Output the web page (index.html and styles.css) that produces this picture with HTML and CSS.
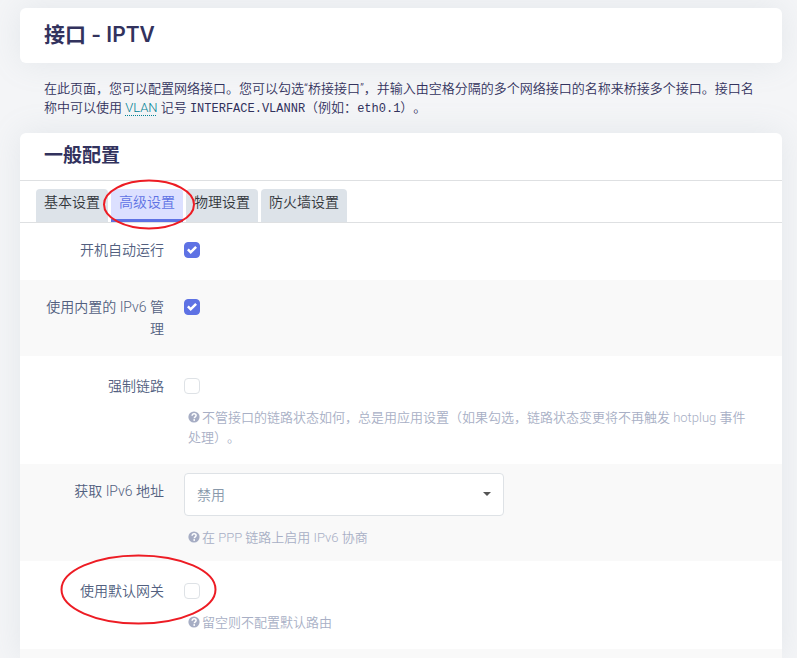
FILE: index.html
```html
<!DOCTYPE html>
<html lang="zh-CN">
<head>
<meta charset="utf-8">
<meta name="viewport" content="width=device-width, initial-scale=1">
<title>接口 - IPTV</title>
<link rel="stylesheet" href="styles.css">
</head>
<body>
<svg class="sprite" aria-hidden="true">
  <symbol id="help" viewBox="0 0 12 12">
    <circle cx="6" cy="6" r="5.6" fill="#a6adc4"/>
    <path d="M4.1 4.7c0-1.3.9-2 2-2s2 .7 2 1.8c0 1.4-1.8 1.3-1.8 2.7" fill="none" stroke="#fff" stroke-width="1.5"/>
    <circle cx="6.2" cy="9" r=".9" fill="#fff"/>
  </symbol>
</svg>
<main class="page">
  <header class="card title-card"><h1>接口 - IPTV</h1></header>
  <p class="intro">在此页面，您可以配置网络接口。您可以勾选“桥接接口”，并输入由空格分隔的多个网络接口的名称来桥接多个接口。接口名称中可以使用 <abbr>VLAN</abbr> 记号 <samp>INTERFACE.VLANNR</samp>（例如：<samp>eth0.1</samp>）。</p>
  <section class="card config">
    <h2>一般配置</h2>
    <nav class="tabs">
      <a class="tab" href="#general">基本设置</a>
      <a class="tab active" href="#advanced">高级设置<svg class="mark mark-tab" aria-hidden="true"><ellipse cx="50%" cy="50%" rx="45" ry="24"/></svg></a>
      <a class="tab" href="#physical">物理设置</a>
      <a class="tab" href="#firewall">防火墙设置</a>
    </nav>
    <form class="rows" id="advanced">
      <div class="row">
        <label class="name" for="auto">开机自动运行</label>
        <div class="field"><input type="checkbox" id="auto" checked></div>
      </div>
      <div class="row">
        <label class="name" for="delegate">使用内置的 IPv6 管理</label>
        <div class="field"><input type="checkbox" id="delegate" checked></div>
      </div>
      <div class="row hinted">
        <label class="name" for="force">强制链路</label>
        <div class="field"><input type="checkbox" id="force">
          <p class="hint"><svg class="help"><use href="#help"/></svg>不管接口的链路状态如何，总是用应用设置（如果勾选，链路状态变更将不再触发 hotplug 事件处理）。</p></div>
      </div>
      <div class="row select-row">
        <label class="name" for="ipv6">获取 IPv6 地址</label>
        <div class="field">
          <div class="select"><select id="ipv6"><option>禁用</option><option>自动</option><option>手动</option></select></div>
          <p class="hint"><svg class="help"><use href="#help"/></svg>在 PPP 链路上启用 IPv6 协商</p></div>
      </div>
      <div class="row hinted">
        <label class="name" for="gateway">使用默认网关</label>
        <div class="field"><input type="checkbox" id="gateway">
          <p class="hint"><svg class="help"><use href="#help"/></svg>留空则不配置默认路由</p></div>
        <svg class="mark mark-row" aria-hidden="true"><ellipse cx="50%" cy="50%" rx="77" ry="34"/></svg>
      </div>
      <div class="row rest"></div>
    </form>
  </section>
</main>
</body>
</html>
```
FILE: styles.css
```css
* { box-sizing: border-box; }
body {
  margin: 0;
  background: #f4f5f7;
  color: #32325d;
  font-family: Roboto, "Noto Sans CJK SC", sans-serif;
  font-size: 14px;
  font-weight: 350;
  line-height: 22px;
  text-spacing-trim: space-all;
}
h1, h2, p { margin: 0; }
.sprite { position: absolute; width: 0; height: 0; }
.page {
  display: flex;
  flex-direction: column;
  min-height: 100vh;
  padding: 8px 15px 0 20px;
}
.card {
  background: #fff;
  border-radius: 6px;
  box-shadow: 0 0 32px rgba(136, 152, 170, .15);
}
.title-card { padding: 12px 24px 13px; }
h1 {
  font-family: Inter, "Noto Sans CJK SC", sans-serif;
  font-size: 21px;
  font-weight: 600;
  line-height: 30px;
}
.intro {
  padding: 16px 24px;
  font-size: 13px;
  line-height: 19px;
}
.intro abbr { color: #008294; text-decoration: underline dotted 1px; text-underline-offset: 3px; }
.intro samp { font-family: "Liberation Mono", monospace; font-size: 12px; font-weight: 400; line-height: 1; }
.config {
  display: flex;
  flex-direction: column;
  flex: 1;
  border-radius: 6px 6px 0 0;
}
h2 {
  padding: 10px 24px 12px;
  border-bottom: 1px solid #dee0e2;
  font-size: 19px;
  line-height: 25px;
}
.tabs {
  display: flex;
  gap: 3px;
  padding: 8px 16px 0;
  border-bottom: 1px solid #dee0e2;
}
.tab {
  position: relative;
  height: 33px;
  padding: 2px 8px;
  border-radius: 4px 4px 0 0;
  background: #dde3e9;
  color: #32363b;
  text-decoration: none;
  white-space: nowrap;
}
.tab.active {
  border-bottom: 3px solid #5e72e4;
  background: #dce0ff;
  color: #5e72e4;
}
.mark {
  position: absolute;
  z-index: 1;
  overflow: visible;
  fill: none;
  stroke: #ed1c24;
  stroke-width: 2;
  pointer-events: none;
}
.mark-tab { left: -8px; top: -9px; width: 92px; height: 49px; }
.mark-row { left: 41px; top: -6px; width: 155px; height: 69px; }
.rows { display: flex; flex-direction: column; flex: 1; }
.row {
  position: relative;
  display: flex;
  gap: 20px;
  padding: 16px 24px;
}
.row.hinted { padding-top: 19px; }
.row:nth-child(even) { background: #f9f9f9; }
.row.rest { flex: 1; min-height: 9px; padding: 0; }
.name {
  flex: 0 0 120px;
  color: #525f7f;
  text-align: right;
}
.field { flex: 1; min-width: 0; }
input[type="checkbox"] {
  display: block;
  appearance: none;
  width: 16px;
  height: 16px;
  margin: 3px 0 6px;
  border: 1px solid #dee2e6;
  border-radius: 4px;
  background: #fff;
}
input[type="checkbox"]:checked {
  border-color: #5e72e4;
  background: #5e72e4 url("data:image/svg+xml,%3Csvg xmlns='http://www.w3.org/2000/svg' viewBox='0 0 8 8'%3E%3Cpath fill='%23fff' d='M6.564.75l-3.59 3.612-1.538-1.55L0 4.26l2.974 2.99L8 2.193z'/%3E%3C/svg%3E") center / 10px 10px no-repeat;
}
.hint {
  padding: 8px 0 0 4px;
  color: #a8afc5;
  font-size: 13px;
  line-height: 20px;
}
.help { width: 12px; height: 12px; margin-right: 2px; vertical-align: -1px; }
.row.select-row { padding-top: 9px; padding-bottom: 13px; }
.select-row .name { padding-top: 7px; }
.select-row .hint { padding-top: 12px; }
.select { position: relative; max-width: 320px; }
.select::after {
  content: "";
  position: absolute;
  right: 13px;
  top: 19px;
  border: 4px solid transparent;
  border-top-color: #555;
  border-bottom: 0;
}
select {
  display: block;
  appearance: none;
  width: 100%;
  height: 43px;
  padding: 0 12px;
  border: 1px solid #dee2e6;
  border-radius: 4px;
  background: #fff;
  color: #8898aa;
  font: inherit;
}
```
